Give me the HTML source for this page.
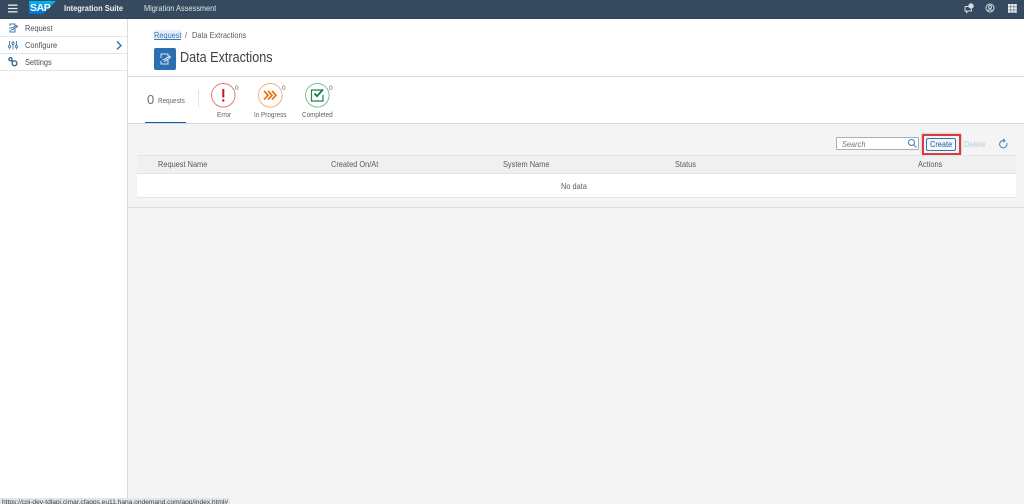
<!DOCTYPE html>
<html><head><meta charset="utf-8"><title>Data Extractions</title>
<style>
*{box-sizing:border-box}
html,body{margin:0;padding:0;width:1024px;height:504px;overflow:hidden;background:#f4f4f4;font-family:"Liberation Sans",sans-serif;color:#32363a}
#w{position:absolute;left:0;top:0;width:1024px;height:504px;overflow:hidden;filter:blur(.35px)}
.a{position:absolute;white-space:nowrap}
.s{transform:scaleX(.87);transform-origin:left center;font-size:8.5px;line-height:10px}
svg{position:absolute;overflow:visible}
.t{color:#5f6468;font-size:7.3px;line-height:9px}
.th{color:#55595d;top:159px}
.nav{color:#4a4f54;left:25px}
.line{position:absolute;background:#e5e5e5}
</style></head><body><div id="w">
<!-- shell -->
<div class="a" style="left:0;top:0;width:1024px;height:19px;background:#354a5f;border-bottom:1px solid #2f4256"></div>
<svg style="left:8px;top:3.5px" width="10" height="10"><path d="M0 1.2H9.5M0 4.5H9.5M0 7.8H9.5" stroke="#e3e8ee" stroke-width="1.3"/></svg>
<svg style="left:29px;top:1px" width="28" height="14"><defs><linearGradient id="g" x1="0" y1="0" x2="0" y2="1"><stop offset="0" stop-color="#00b8f1"/><stop offset="1" stop-color="#0a6ed1"/></linearGradient></defs><path d="M0 0H27L14 13H0Z" fill="url(#g)"/></svg>
<div class="a" style="left:30px;top:2px;font:bold 10.5px 'Liberation Sans',sans-serif;line-height:12px;color:#fff;letter-spacing:-.4px">SAP</div>
<div class="a s" style="left:64px;top:3px;font-weight:bold;color:#eef1f4;transform:scaleX(.88)">Integration Suite</div>
<div class="a s" style="left:144px;top:3px;color:#e0e5ea">Migration Assessment</div>
<svg style="left:964px;top:3px" width="10" height="10" fill="none" stroke="#d5dde6" stroke-width="1"><path d="M1 3.5H5.5M1 3.5V8H2.5V9.5L4 8H7.5V6"/><circle cx="7" cy="3" r="2.2" fill="#d5dde6"/></svg>
<svg style="left:985px;top:2.5px" width="10" height="10" fill="none" stroke="#d5dde6" stroke-width="1"><circle cx="5" cy="5" r="4"/><circle cx="5" cy="4" r="1.5"/><path d="M2.5 8C3 6.3 7 6.3 7.5 8"/></svg>
<svg style="left:1007.5px;top:3.5px" width="9" height="9" fill="#eef1f4"><path d="M0 0h2.6v2.6H0zM3.1 0h2.6v2.6H3.1zM6.2 0h2.6v2.6H6.2zM0 3.1h2.6v2.6H0zM3.1 3.1h2.6v2.6H3.1zM6.2 3.1h2.6v2.6H6.2zM0 6.2h2.6v2.6H0zM3.1 6.2h2.6v2.6H3.1zM6.2 6.2h2.6v2.6H6.2z"/></svg>
<!-- sidebar -->
<div class="a" style="left:0;top:19px;width:128px;height:485px;background:#fff;border-right:1px solid #dcdcdc"></div>
<div class="line" style="left:0;top:36px;width:127px;height:1px"></div>
<div class="line" style="left:0;top:53px;width:127px;height:1px"></div>
<div class="line" style="left:0;top:70px;width:127px;height:1px"></div>
<svg style="left:8px;top:23px" width="10" height="10" fill="none" stroke="#427cac" stroke-width="1"><path d="M2 3V1H7V3M7 6V9H2V7"/><path d="M1 5H4L8.5 2.5L9.5 3.5L5 6.5L3 7" stroke-width="1.1"/></svg>
<svg style="left:8px;top:41px" width="10" height="9" fill="none" stroke="#427cac" stroke-width=".9"><path d="M1.5 0V8.5M5 0V8.5M8.5 0V8.5"/><circle cx="1.5" cy="5.5" r="1.1" fill="#fff"/><circle cx="5" cy="2.5" r="1.1" fill="#fff"/><circle cx="8.5" cy="5.5" r="1.1" fill="#fff"/></svg>
<svg style="left:8px;top:57px" width="10" height="10" fill="none" stroke="#24618f" stroke-width="1.3"><circle cx="2.5" cy="2.2" r="1.6"/><circle cx="6.5" cy="6.3" r="2.4"/><path d="M3.5 3.3L5 4.8"/></svg>
<div class="a s nav" style="top:23px">Request</div>
<div class="a s nav" style="top:40px">Configure</div>
<div class="a s nav" style="top:57px">Settings</div>
<svg style="left:116px;top:41px" width="6" height="9" fill="none" stroke="#2c6ea5" stroke-width="1.3"><path d="M1 .5L5 4.5L1 8.5"/></svg>
<!-- header -->
<div class="a" style="left:128px;top:19px;width:896px;height:58px;background:#fff;border-bottom:1px solid #d9d9d9"></div>
<div class="a" style="left:154px;top:30px;width:27px;height:10px;background:#e8f0f8;border-bottom:1px solid #3f7cb0"></div>
<div class="a s" style="left:154px;top:30px;color:#2f75b5">Request</div>
<div class="a s" style="left:185px;top:30px;color:#5f6468">/</div>
<div class="a s" style="left:192px;top:30px;color:#55595d">Data Extractions</div>
<div class="a" style="left:154px;top:47.5px;width:22px;height:22.5px;background:#2a6fb1;border-radius:2px"></div>
<svg style="left:160px;top:53px" width="11" height="12" fill="none" stroke="#d9e6f2" stroke-width="1"><path d="M1 5V1H8V3M8 7V11H1V8"/><path d="M2.5 6.5H4.5L9.5 3L10.5 4.2L5.5 8L3.8 8.3" stroke-width="1.1"/></svg>
<div class="a" style="left:180px;top:50px;font-size:14.5px;line-height:17px;color:#3d4145;transform:scaleX(.87);transform-origin:left center">Data Extractions</div>
<!-- icon tab bar -->
<div class="a" style="left:128px;top:77px;width:896px;height:47px;background:#fff;border-bottom:1px solid #d9d9d9"></div>
<div class="a" style="left:147px;top:92px;font-size:13px;line-height:15px;color:#6d6d6d">0</div>
<div class="a s t" style="left:158px;top:95.5px">Requests</div>
<div class="a" style="left:145px;top:121.5px;width:41px;height:1.5px;background:#0a5ea8"></div>
<div class="a" style="left:197.5px;top:90px;width:1px;height:17px;background:#e2e2e2"></div>
<svg style="left:211px;top:83px" width="25" height="25" fill="none"><circle cx="12.3" cy="12.3" r="11.8" stroke="#e07a82" stroke-width="1"/><path d="M12.3 6V14.5" stroke="#c8141c" stroke-width="2"/><circle cx="12.3" cy="17.5" r="1.2" fill="#c8141c"/></svg>
<svg style="left:258px;top:83px" width="25" height="25" fill="none"><circle cx="12.3" cy="12.3" r="11.8" stroke="#f3b27a" stroke-width="1"/><path d="M6 8L10 12.3L6 16.5M10 8L14 12.3L10 16.5M14 8L18 12.3L14 16.5" stroke="#e9730c" stroke-width="1.7"/></svg>
<svg style="left:305px;top:83px" width="25" height="25" fill="none"><circle cx="12.3" cy="12.3" r="11.8" stroke="#7fbc9b" stroke-width="1"/><path d="M17.5 7H6.5V18H18V12" stroke="#2b7d4f" stroke-width="1.2"/><path d="M9.5 10.5L12 13.2L18 6.5" stroke="#107e3e" stroke-width="1.8"/></svg>
<div class="a" style="left:235px;top:84.5px;font-size:6.5px;line-height:8px;color:#5f6468">0</div>
<div class="a" style="left:282px;top:84.5px;font-size:6.5px;line-height:8px;color:#5f6468">0</div>
<div class="a" style="left:329px;top:84.5px;font-size:6.5px;line-height:8px;color:#5f6468">0</div>
<div class="a s t" style="left:217px;top:110px">Error</div>
<div class="a s t" style="left:254px;top:110px">In Progress</div>
<div class="a s t" style="left:302px;top:110px">Completed</div>
<!-- toolbar -->
<div class="a" style="left:836px;top:137px;width:83px;height:13px;background:#fff;border:1px solid #a9b0b6;border-radius:1px"></div>
<div class="a s" style="left:842px;top:138.5px;font-style:italic;color:#777">Search</div>
<svg style="left:908px;top:139px" width="9" height="9" fill="none" stroke="#3f7cb0" stroke-width="1"><circle cx="3.5" cy="3.5" r="3"/><path d="M5.7 5.7L8.5 8.5"/></svg>
<div class="a" style="left:922px;top:133.5px;width:39px;height:21px;border:2px solid #dc3a3f;box-shadow:0 0 2px rgba(0,0,0,.35)"></div>
<div class="a" style="left:926px;top:137.5px;width:30px;height:13px;background:#f7f7f7;border:1px solid #2f75b5;border-radius:2px"></div>
<div class="a s" style="left:929.5px;top:139px;color:#0a5ea8">Create</div>
<div class="a s" style="left:964px;top:139px;color:#b6cde4">Delete</div>
<svg style="left:998px;top:139px" width="10" height="10" fill="none" stroke="#3f7cb0" stroke-width="1"><path d="M5.5 1.5A3.7 3.7 0 1 0 8.8 4"/><path d="M5 0L7 1.7L5 3.2"/></svg>
<!-- table -->
<div class="a" style="left:137px;top:155px;width:879px;height:19px;background:#f0f0f0;border-top:1px solid #e5e5e5;border-bottom:1px solid #e5e5e5"></div>
<div class="a" style="left:137px;top:174px;width:879px;height:24px;background:#fff;border-bottom:1px solid #e5e5e5"></div>
<div class="a s th" style="left:158px">Request Name</div>
<div class="a s th" style="left:331px">Created On/At</div>
<div class="a s th" style="left:503px">System Name</div>
<div class="a s th" style="left:675px">Status</div>
<div class="a s th" style="left:918px">Actions</div>
<div class="a s" style="left:561px;top:181px;color:#55595d">No data</div>
<div class="a" style="left:128px;top:207px;width:896px;height:1px;background:#dedede"></div>
<!-- status bubble -->
<div class="a" style="left:0;top:498px;width:230px;height:6px;background:#e3e5e8;border-radius:0 3px 0 0;overflow:hidden;font-size:6.6px;line-height:8px;color:#3c4043;padding:1px 0 0 2px">https://cpi-dev-tdlapi.cimar.cfapps.eu11.hana.ondemand.com/app/index.html#</div>
</div></body></html>
